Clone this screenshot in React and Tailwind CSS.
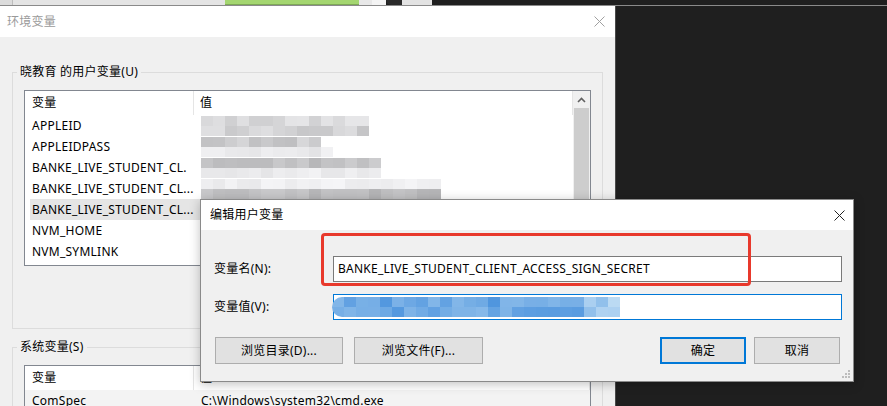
import React from "react";

const FONT = "font-[family-name:'Noto_Sans','Noto_Sans_CJK_SC',sans-serif]";

function rand(seed) {
  const x = Math.sin(seed * 91.37 + 7.13) * 43758.5453;
  return x - Math.floor(x);
}

// pixelated (blurred) value cells
function Mosaic({ bands, seed, blue }) {
  return (
    <div className="flex flex-col blur-[0.5px]">
      {bands.map((b, bi) => {
        const count = Math.ceil(b.w / 12);
        return (
          <div key={bi} className="flex h-[10px]">
            {Array.from({ length: count }).map((_, i) => {
              const r = rand(seed * 31 + bi * 17 + i);
              let color;
              if (blue) {
                const fade = i > count - 4 ? 0.55 : 0;
                const t = Math.min(1, r * 0.5 + fade);
                const rr = Math.round(80 + t * 110);
                const gg = Math.round(150 + t * 70);
                const bb = Math.round(222 + t * 22);
                color = `rgb(${rr},${gg},${bb})`;
              } else {
                const g = Math.round(b.base + (r - 0.5) * b.range);
                color = `rgb(${g},${g},${g + 2})`;
              }
              return <div key={i} className="w-[12px] h-full" style={{ backgroundColor: color }} />;
            })}
          </div>
        );
      })}
    </div>
  );
}

function CloseX({ className }) {
  return (
    <svg width="11" height="11" viewBox="0 0 11 11" className={className}>
      <path d="M0.5 0.5L10.5 10.5M10.5 0.5L0.5 10.5" stroke="currentColor" strokeWidth="1" fill="none" />
    </svg>
  );
}

const userVars = [
  { name: "APPLEID", bands: [{ w: 168, base: 222, range: 30 }, { w: 168, base: 210, range: 30 }] },
  { name: "APPLEIDPASS", bands: [{ w: 120, base: 202, range: 30 }, { w: 132, base: 234, range: 16 }] },
  { name: "BANKE_LIVE_STUDENT_CL.", bands: [{ w: 180, base: 192, range: 24 }, { w: 180, base: 236, range: 14 }] },
  { name: "BANKE_LIVE_STUDENT_CL...", bands: [{ w: 240, base: 238, range: 14 }, { w: 240, base: 190, range: 24 }] },
  { name: "BANKE_LIVE_STUDENT_CL...", selected: true, bands: [{ w: 240, base: 228, range: 18 }, { w: 240, base: 196, range: 22 }] },
  { name: "NVM_HOME" },
  { name: "NVM_SYMLINK" },
];

function ListHeader() {
  return (
    <div className="flex h-[24px] shrink-0 items-center bg-white">
      <div className="w-[169px] h-full flex items-center pl-[7px] border-r border-[#e5e5e5]">变量</div>
      <div className="flex-1 h-full flex items-center pl-[6px] border-r border-[#e5e5e5]">值</div>
    </div>
  );
}

function Scrollbar() {
  return (
    <div className="w-[17px] h-full bg-[#f0f0f0] flex flex-col">
      <div className="h-[17px] flex items-center justify-center">
        <svg width="9" height="6" viewBox="0 0 9 6">
          <path d="M1 5L4.5 1.5L8 5" stroke="#606060" strokeWidth="1.6" fill="none" />
        </svg>
      </div>
      <div className="flex-1 mx-[1px] bg-[#cdcdcd] mb-[20px]" />
    </div>
  );
}

function Btn({ children, primary, w }) {
  return (
    <div
      className={`${w} h-[27px] flex items-center justify-center bg-[#e1e1e1] ${
        primary ? "border-2 border-[#0078d7]" : "border border-[#adadad]"
      }`}
    >
      {children}
    </div>
  );
}

export default function App() {
  return (
    <div className={`w-[887px] h-[406px] bg-[#1f1f1f] relative overflow-hidden text-[12px] tracking-[0.25px] text-black ${FONT}`}>
      {/* strip of the window behind */}
      <div className="flex h-[6px] border-b border-[#8a8a8a]">
        <div className="w-[13px] bg-[#dcdcdc] border-r border-[#bdbdbd]" />
        <div className="w-[212px] bg-[#e4e4e4]" />
        <div className="w-[134px] bg-[#a4d670] border-b border-[#7ea957]" />
        <div className="w-[13px] bg-[#e8e8e8]" />
        <div className="w-[14px] bg-[#f4f4f4]" />
        <div className="w-[16px] bg-[#2a2a2a] rounded-bl-[8px]" />
        <div className="w-[30px] bg-[#e3e3e3]" />
        <div className="flex-1 bg-[#1f1f1f]" />
      </div>

      {/* 环境变量 window */}
      <div className="w-[616px] h-[400px] bg-[#f0f0f0] border-r border-[#4a4a4a] flex flex-col overflow-hidden">
        <div className="h-[31px] shrink-0 bg-white flex items-center justify-between pl-[7px] pr-[10px]">
          <span className="text-[#9a9a9a]">环境变量</span>
          <CloseX className="text-[#a0a0a0]" />
        </div>

        <div className="pl-[12px] pt-[26px] flex flex-col shrink-0">
          <fieldset className="w-[591px] h-[266px] shrink-0 border border-[#dcdcdc]">
            <legend className="ml-[4px] px-[3px] leading-[18px]">晓教育 的用户变量(U)</legend>
            <div className="ml-[11px] mt-[9px] w-[567px] h-[176px] border border-[#828790] bg-white flex">
              <div className="flex-1 flex flex-col">
                <ListHeader />
                <div className="flex flex-col">
                  {userVars.map((v, i) => (
                    <div key={i} className="flex h-[21px] items-center">
                      <div
                        className={`ml-[5px] w-[170px] h-full flex items-center pl-[2px] ${
                          v.selected ? "bg-[#e5e5e5]" : ""
                        }`}
                      >
                        {v.name}
                      </div>
                      <div className="pl-[1px] h-full flex items-center">
                        {v.bands && <Mosaic bands={v.bands} seed={i + 1} />}
                      </div>
                    </div>
                  ))}
                </div>
              </div>
              <Scrollbar />
            </div>
          </fieldset>

          <fieldset className="mt-[9px] w-[591px] h-[80px] shrink-0 border border-[#dcdcdc]">
            <legend className="ml-[4px] px-[3px] leading-[18px]">系统变量(S)</legend>
            <div className="ml-[11px] mt-[9px] w-[567px] h-[60px] border border-[#828790] bg-white flex flex-col">
              <ListHeader />
              <div className="flex h-[21px] shrink-0 items-center bg-[#f3f3f3]">
                <div className="ml-[5px] w-[170px] pl-[2px]">ComSpec</div>
                <div className="pl-[1px]">C:\Windows\system32\cmd.exe</div>
              </div>
            </div>
          </fieldset>
        </div>
      </div>

      {/* 编辑用户变量 dialog */}
      <div className="absolute left-[200px] top-[199px] w-[654px] h-[183px] bg-[#f0f0f0] border border-[#8a8a8a] shadow-[0_2px_10px_rgba(0,0,0,0.25)] flex flex-col">
        <div className="h-[30px] shrink-0 bg-white flex items-center justify-between pl-[9px] pr-[8px]">
          <span>编辑用户变量</span>
          <CloseX className="text-[#222]" />
        </div>

        <div className="flex flex-col pl-[13px] pr-[11px] pt-[26px]">
          <div className="flex items-center h-[26px]">
            <div className="w-[119px]">变量名(N):</div>
            <div className="flex-1 h-full border border-[#7a7a7a] bg-white flex items-center pl-[4px]">
              BANKE_LIVE_STUDENT_CLIENT_ACCESS_SIGN_SECRET
            </div>
          </div>
          <div className="flex items-center h-[26px] mt-[12px]">
            <div className="w-[119px]">变量值(V):</div>
            <div className="flex-1 h-full border border-[#0078d7] bg-white flex items-center">
              <div className="-ml-[2px] rounded-l-[10px] overflow-hidden">
                <Mosaic blue seed={9} bands={[{ w: 288 }, { w: 288 }]} />
              </div>
            </div>
          </div>
        </div>

        <div className="flex items-center pl-[14px] pr-[13px] mt-[17px]">
          <Btn w="w-[128px]">浏览目录(D)...</Btn>
          <div className="ml-[11px]">
            <Btn w="w-[129px]">浏览文件(F)...</Btn>
          </div>
          <div className="flex-1" />
          <Btn primary w="w-[86px]">确定</Btn>
          <div className="ml-[8px]">
            <Btn w="w-[86px]">取消</Btn>
          </div>
        </div>

        {/* resize grip */}
        <svg width="10" height="10" viewBox="0 0 10 10" className="absolute right-[2px] bottom-[2px]">
          <g fill="#bcbcbc">
            <rect x="7" y="1" width="2" height="2" />
            <rect x="4" y="4" width="2" height="2" />
            <rect x="7" y="4" width="2" height="2" />
            <rect x="1" y="7" width="2" height="2" />
            <rect x="4" y="7" width="2" height="2" />
            <rect x="7" y="7" width="2" height="2" />
          </g>
        </svg>

        {/* red annotation box */}
        <div className="absolute left-[120px] top-[33px] w-[430px] h-[53px] border-[3px] border-[#e8392c] rounded-[4px]" />
      </div>
    </div>
  );
}
